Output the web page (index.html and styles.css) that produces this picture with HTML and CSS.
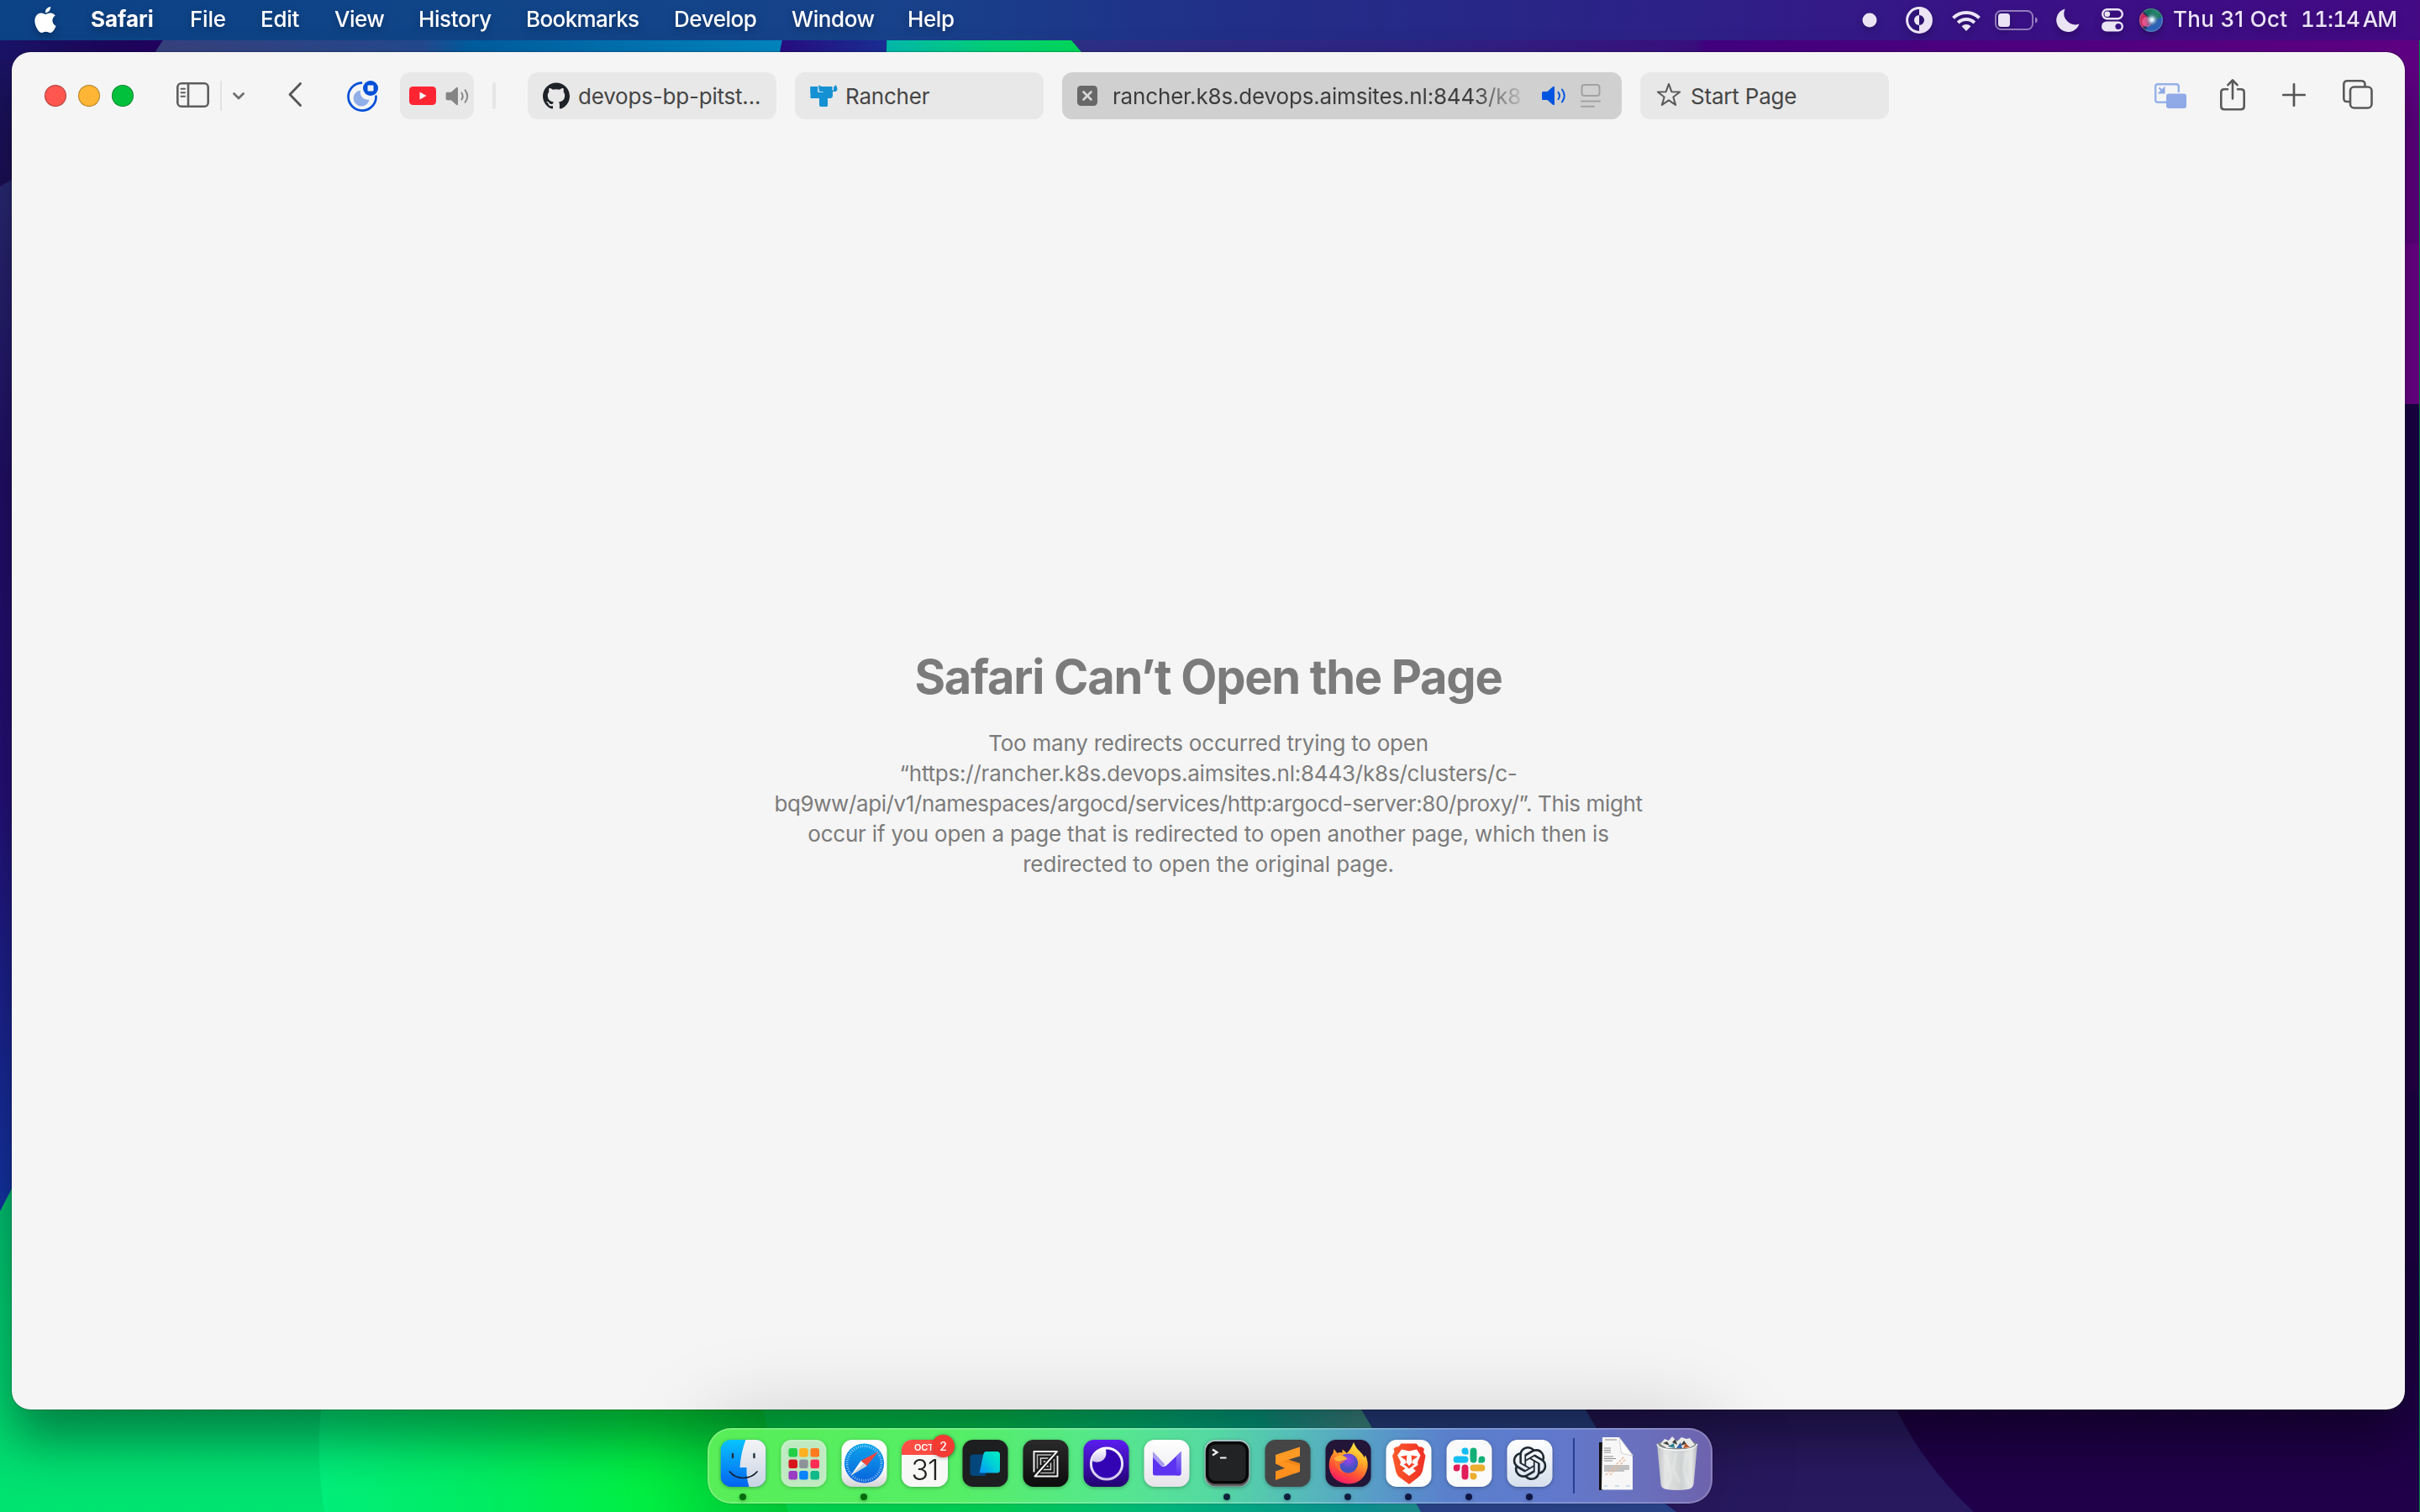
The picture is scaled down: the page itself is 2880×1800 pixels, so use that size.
FILE: index.html
```html
<!DOCTYPE html>
<html lang="en">
<head>
<meta charset="utf-8">
<title>Safari</title>
<link rel="stylesheet" href="styles.css">
</head>
<body>
<svg class="wallpaper" viewBox="0 0 2880 1800" preserveAspectRatio="none" aria-hidden="true">
  <defs>
    <linearGradient id="wLeft" x1="0" y1="0" x2="0" y2="1450" gradientUnits="userSpaceOnUse"><stop offset="0" stop-color="#292a75"/><stop offset=".15" stop-color="#292a75"/><stop offset=".4" stop-color="#210e68"/><stop offset=".65" stop-color="#25107a"/><stop offset="1" stop-color="#1236a8"/></linearGradient>
    <linearGradient id="wCorner" x1="0" y1="0" x2="0" y2="220" gradientUnits="userSpaceOnUse"><stop offset="0" stop-color="#1a1468"/><stop offset="1" stop-color="#1c1058"/></linearGradient>
    <linearGradient id="wBand" x1="0" y1="0" x2="200" y2="0" gradientUnits="userSpaceOnUse"><stop offset="0" stop-color="#1a1468"/><stop offset=".6" stop-color="#1c085c"/><stop offset="1" stop-color="#220060"/></linearGradient>
    <linearGradient id="wBlue" x1="190" y1="0" x2="930" y2="0" gradientUnits="userSpaceOnUse"><stop offset="0" stop-color="#37427f"/><stop offset=".42" stop-color="#25498f"/><stop offset=".5" stop-color="#005da0"/><stop offset="1" stop-color="#0087c0"/></linearGradient>
    <linearGradient id="wNavy" x1="927" y1="0" x2="1055" y2="0" gradientUnits="userSpaceOnUse"><stop offset="0" stop-color="#280d82"/><stop offset="1" stop-color="#1a2f95"/></linearGradient>
    <linearGradient id="wTeal" x1="1055" y1="0" x2="1280" y2="0" gradientUnits="userSpaceOnUse"><stop offset="0" stop-color="#00bbae"/><stop offset=".55" stop-color="#00d278"/><stop offset="1" stop-color="#00d95c"/></linearGradient>
    <linearGradient id="wTop" x1="1280" y1="0" x2="2880" y2="0" gradientUnits="userSpaceOnUse"><stop offset="0" stop-color="#2e3088"/><stop offset=".25" stop-color="#2f2484"/><stop offset=".46" stop-color="#3a1080"/><stop offset=".47" stop-color="#430080"/><stop offset="1" stop-color="#600084"/></linearGradient>
    <linearGradient id="wG1" x1="0" y1="1415" x2="0" y2="1800" gradientUnits="userSpaceOnUse"><stop offset="0" stop-color="#00c172"/><stop offset="1" stop-color="#00e470"/></linearGradient>
    <linearGradient id="wG2" x1="380" y1="0" x2="940" y2="0" gradientUnits="userSpaceOnUse"><stop offset="0" stop-color="#00ee7a"/><stop offset=".35" stop-color="#00ec62"/><stop offset=".7" stop-color="#00ef42"/><stop offset="1" stop-color="#00d83a"/></linearGradient>
    <linearGradient id="wG3" x1="908" y1="0" x2="1691" y2="0" gradientUnits="userSpaceOnUse"><stop offset="0" stop-color="#00e452"/><stop offset=".35" stop-color="#00dc5a"/><stop offset=".6" stop-color="#00c884"/><stop offset=".9" stop-color="#0a9c9c"/><stop offset="1" stop-color="#1f9496"/></linearGradient>
    <linearGradient id="wHaze" x1="1490" y1="0" x2="1620" y2="0" gradientUnits="userSpaceOnUse"><stop offset="0" stop-color="#4a9a94" stop-opacity="0"/><stop offset="1" stop-color="#4a9a94" stop-opacity=".9"/></linearGradient>
    <linearGradient id="wP" x1="0" y1="1500" x2="0" y2="1800" gradientUnits="userSpaceOnUse"><stop offset="0" stop-color="#1b0042"/><stop offset="1" stop-color="#200049"/></linearGradient>
  </defs>
  <rect width="2880" height="1800" fill="#1d0044"/>
  <rect width="900" height="1500" fill="url(#wLeft)"/>
  <path d="M0 0H60V206L14 214L0 222z" fill="url(#wCorner)"/>
  <path d="M0 48H240L160 120H40L14 70H0z" fill="url(#wBand)"/>
  <path d="M225 0H940L920 120H147z" fill="url(#wBlue)"/>
  <path d="M940 0H1056L1054 120H917z" fill="url(#wNavy)"/>
  <path d="M1056 0H1234L1338 120H1054z" fill="url(#wTeal)"/>
  <path d="M1234 0H2880V292H1400L1287 62z" fill="url(#wTop)"/>
  <path d="M2800 296L2880 289V481H2800z" fill="#6e008c"/>
  <path d="M2800 481H2880V714L2800 708z" fill="#1a0048"/>
  <path d="M2800 708L2880 714V1300H2800z" fill="#220046"/>
  <path d="M2000 1500H2880V1800H2000z" fill="url(#wP)"/>
  <path d="M1850 1600H2230L2257 1678Q2290 1745 2349 1800H1850z" fill="#28195f"/>
  <path d="M1600 1600H1860L1887 1678Q1925 1750 1995 1800H1600z" fill="#2b4690"/>
  <path d="M0 1442L14 1415L60 1380H420V1800H0z" fill="url(#wG1)"/>
  <path d="M382 1600V1678Q376 1735 386 1800H950V1600z" fill="url(#wG2)"/>
  <path d="M896 1600L908 1678L938 1800H1691L1620 1678L1590 1600z" fill="url(#wG3)"/>
  <path d="M1490 1660H1612L1620 1678L1650 1730H1530z" fill="url(#wHaze)"/>
  <rect x="2879" y="48" width="1" height="1752" fill="#008040"/>
</svg>

<header class="menubar">
  <svg class="apple" viewBox="2.2 0 19.6 24"><path fill="#fff" d="M12.152 6.896c-.948 0-2.415-1.078-3.96-1.04-2.04.027-3.91 1.183-4.961 3.014-2.117 3.675-.546 9.103 1.519 12.09 1.013 1.454 2.208 3.09 3.792 3.039 1.52-.065 2.09-.987 3.935-.987 1.831 0 2.35.987 3.96.948 1.637-.026 2.676-1.48 3.676-2.948 1.156-1.688 1.636-3.325 1.662-3.415-.039-.013-3.182-1.221-3.22-4.857-.026-3.04 2.48-4.494 2.597-4.559-1.429-2.09-3.623-2.324-4.39-2.376-2-.156-3.675 1.09-4.61 1.09zM15.53 3.83c.843-1.012 1.4-2.427 1.245-3.83-1.207.052-2.662.805-3.532 1.818-.78.896-1.454 2.338-1.273 3.714 1.338.104 2.715-.688 3.559-1.701"/></svg>
  <nav class="menus">
    <span class="m-app">Safari</span><span class="m-file">File</span><span class="m-edit">Edit</span><span class="m-view">View</span><span class="m-history">History</span><span class="m-bookmarks">Bookmarks</span><span class="m-develop">Develop</span><span class="m-window">Window</span><span class="m-help">Help</span>
  </nav>
  <div class="status">
    <svg class="s-dot" viewBox="0 0 18 18"><circle cx="9" cy="9" r="8.5" fill="#ebe4f5"/></svg>
    <svg class="s-half" viewBox="0 0 32 32"><circle cx="16" cy="16" r="14.4" fill="none" stroke="#ebe4f5" stroke-width="3"/><path d="M16 1.5A14.5 14.5 0 0 1 16 30.500V22A6 6 0 0 0 16 10z" fill="#ebe4f5"/><path d="M16 10A6 6 0 0 0 16 22z" fill="#ebe4f5"/></svg>
    <svg class="s-wifi" viewBox="0 0 34 25"><g fill="none" stroke="#ebe4f5" stroke-width="4"><path d="M1.500 9.300A22 22 0 0 1 32.500 9.300"/><path d="M7.200 15A14 14 0 0 1 26.800 15"/></g><path d="M11.500 19.300A7.800 7.800 0 0 1 22.500 19.300L17 25z" fill="#ebe4f5"/></svg>
    <svg class="s-batt" viewBox="0 0 52 24"><rect x="1" y="1" width="44" height="22" rx="6.500" fill="none" stroke="#ebe4f5" stroke-opacity=".5" stroke-width="2"/><rect x="4" y="4" width="14" height="16" rx="3.500" fill="#ebe4f5"/><path d="M48 8.500a3.600 3.600 0 0 1 0 7z" fill="#ebe4f5" fill-opacity=".55"/></svg>
    <svg class="s-moon" viewBox="0 0 28 28"><path d="M10.500.5A14 14 0 1 0 27.500 18.500A13.500 13.500 0 0 1 10.500.5z" fill="#ebe4f5"/></svg>
    <svg class="s-cc" viewBox="0 0 26 28"><rect x="1.200" y="1.200" width="23.600" height="11" rx="5.500" fill="none" stroke="#ebe4f5" stroke-width="2.400"/><circle cx="6.800" cy="6.700" r="3.300" fill="#ebe4f5"/><rect y="15.500" width="26" height="12" rx="6" fill="#ebe4f5"/><circle cx="20" cy="21.500" r="3.600" fill="#3b1186"/></svg>
    <svg class="s-siri" viewBox="0 0 28 28"><defs><radialGradient id="siri"><stop offset="0" stop-color="#fff"/><stop offset=".28" stop-color="#c9e9f5" stop-opacity=".9"/><stop offset="1" stop-color="#2b4468" stop-opacity="0"/></radialGradient><clipPath id="siriC"><circle cx="14" cy="14" r="14"/></clipPath></defs><g clip-path="url(#siriC)"><rect width="28" height="28" fill="#27355c"/><path d="M14 14L0 2V26z" fill="#c8285c"/><path d="M14 14L3 0H28V12z" fill="#16705f"/><path d="M14 14L28 10V28H6z" fill="#2a62b8"/><circle cx="9" cy="16" r="6" fill="#f06aa0" opacity=".7"/><circle cx="18" cy="8" r="6" fill="#2a9070" opacity=".6"/><circle cx="15" cy="13.500" r="8.500" fill="url(#siri)"/></g><circle cx="14" cy="14" r="13.400" fill="none" stroke="#a9a3bb" stroke-opacity=".5" stroke-width="1"/></svg>
    <span class="date">Thu 31 Oct</span><span class="time">11:14&thinsp;AM</span>
  </div>
</header>

<main class="window">
  <div class="toolbar">
    <div class="lights"><i class="red"></i><i class="amber"></i><i class="green"></i></div>
    <svg class="t-side" viewBox="0 0 39 30"><g fill="none" stroke="#5e5e5e" stroke-width="2.600"><rect x="1.300" y="1.300" width="36.400" height="27.400" rx="4.500"/><path d="M14 1.500V28.500"/></g><path d="M5.500 7.700H10M5.500 12.200H10M5.500 16.700H10" stroke="#5e5e5e" stroke-width="1.900" stroke-linecap="round"/></svg>
    <i class="rule thin"></i>
    <svg class="t-chev" viewBox="0 0 14 9"><path d="M1.500 1.500L7 7L12.500 1.500" fill="none" stroke="#6f6f6f" stroke-width="2.800" stroke-linecap="round" stroke-linejoin="round"/></svg>
    <svg class="t-back" viewBox="0 0 16 29"><path d="M14.500 1.500L2 14.500L14.500 27.500" fill="none" stroke="#555" stroke-width="2.800" stroke-linecap="round" stroke-linejoin="round"/></svg>
    <svg class="t-focus" viewBox="0 0 37 37"><path d="M17 2.600A16.500 16.500 0 1 0 34.500 18.500" fill="none" stroke="#0450d8" stroke-width="2.700" stroke-linecap="round"/><path d="M16 11.500A9.500 9.500 0 1 0 26.500 22.500A9 9 0 0 1 16 11.500z" fill="#90aee8"/><circle cx="28" cy="9" r="9" fill="#0450d8"/><rect x="24.500" y="5.500" width="7" height="7" rx="1" fill="#f5f5f5"/></svg>
    <div class="pin">
      <svg class="p-yt" viewBox="0 0 32 22"><rect width="32" height="22" rx="4.500" fill="#ff2432"/><path d="M12.500 6.500L20.500 11L12.500 15.500z" fill="#fff"/></svg>
      <svg class="p-spk" viewBox="0 0 29 24"><path d="M0 8.500Q0 7 1.500 7H6.500L13 1.300Q15 0 15 2.200V21.800Q15 24 13 22.700L6.500 17H1.500Q0 17 0 15.500z" fill="#858585"/><g fill="none" stroke="#858585" stroke-width="2" stroke-linecap="round"><path d="M19.500 7.800Q22.500 12 19.500 16.200"/><path d="M24 4.500Q29.500 12 24 19.500"/></g></svg>
    </div>
    <i class="rule thick"></i>
    <div class="tabs">
      <div class="tab">
        <svg class="i-gh" viewBox="0 0 24 24"><path fill="#1f2328" d="M12 .297c-6.630 0-12 5.373-12 12 0 5.303 3.438 9.800 8.205 11.385.6.113.82-.258.82-.577 0-.285-.01-1.040-.015-2.040-3.338.724-4.042-1.610-4.042-1.610C4.422 18.070 3.633 17.700 3.633 17.700c-1.087-.744.084-.729.084-.729 1.205.084 1.838 1.236 1.838 1.236 1.070 1.835 2.809 1.305 3.495.998.108-.776.417-1.305.76-1.605-2.665-.3-5.466-1.332-5.466-5.930 0-1.310.465-2.380 1.235-3.220-.135-.303-.54-1.523.105-3.176 0 0 1.005-.322 3.300 1.230.96-.267 1.980-.399 3-.405 1.020.006 2.040.138 3 .405 2.280-1.552 3.285-1.230 3.285-1.230.645 1.653.24 2.873.12 3.176.765.840 1.230 1.910 1.230 3.220 0 4.610-2.805 5.625-5.475 5.920.42.360.81 1.096.81 2.220 0 1.606-.015 2.896-.015 3.286 0 .315.21.690.825.570C20.565 22.092 24 17.592 24 12.297c0-6.627-5.373-12-12-12"/></svg>
        <span class="x-gh">devops-bp-pitst...</span>
      </div>
      <div class="tab">
        <svg class="i-ra" viewBox="0 0 32 26"><path d="M0 2H8V8.500H11Q9.200 5 10 0Q11.500 2 14 2H26V6.500H27.500V3L30 0Q33 4 31.500 6.500Q31 8 29 8H26.500V13Q26.500 15 24.500 16H20.500V24.500Q20.500 26 19 26H12.500Q10.500 26 10.500 24V16H0z" fill="#1491d2"/><path d="M0 2H9V10H0z" fill="#1491d2"/><path d="M9.300 2.500V8.500H15" fill="none" stroke="#b8dbef" stroke-width="1"/></svg>
        <span class="x-ra">Rancher</span>
      </div>
      <div class="tab active">
        <svg class="i-close" viewBox="0 0 24 24"><rect width="24" height="24" rx="4.500" fill="#686868"/><path d="M7.500 7.500L16.500 16.500M16.500 7.500L7.500 16.500" stroke="#d8d8d8" stroke-width="2.600" stroke-linecap="round"/></svg>
        <span class="x-url">rancher.k8s.devops.aimsites.nl:8443/k8</span>
        <svg class="i-spk" viewBox="0 0 29 24"><path d="M0 8.500Q0 7 1.500 7H6.500L13 1.300Q15 0 15 2.200V21.800Q15 24 13 22.700L6.500 17H1.500Q0 17 0 15.500z" fill="#0055e0"/><g fill="none" stroke="#0055e0" stroke-width="2" stroke-linecap="round"><path d="M19.500 7.800Q22.500 12 19.500 16.200"/><path d="M24 4.500Q29.500 12 24 19.500"/></g></svg>
        <svg class="i-read" viewBox="0 0 24 28"><g fill="none" stroke="#a2a2a2" stroke-width="2"><rect x="1.500" y="1" width="21" height="13" rx="3"/><path d="M1 20.500H23M1 26.800H16" stroke-linecap="round"/></g></svg>
      </div>
      <div class="tab">
        <svg class="i-star" viewBox="0 0 28 27"><path d="M14 1.800L17.100 10.400L26.300 10.700L19 16.300L21.600 25.100L14 19.900L6.400 25.100L9 16.300L1.700 10.700L10.900 10.400z" fill="none" stroke="#5a5a5a" stroke-width="1.900" stroke-linejoin="round"/></svg>
        <span class="x-start">Start Page</span>
      </div>
    </div>
    <svg class="t-pip" viewBox="0 0 38 30"><path d="M14 22.800H4Q1.200 22.800 1.200 20V4Q1.200 1.200 4 1.200H26Q28.800 1.200 28.800 4V11" fill="none" stroke="#96b2ea" stroke-width="2.400"/><rect x="14" y="12.500" width="24" height="17.500" rx="3" fill="#8faae6"/><path d="M5.500 5.500L10 10M11.500 6V11.500H6z" stroke="#8faae6" stroke-width="2" fill="#8faae6"/></svg>
    <svg class="t-share" viewBox="0 0 30 38"><g fill="none" stroke="#5a5a5a" stroke-width="2.600" stroke-linecap="round" stroke-linejoin="round"><path d="M9 12.300H5Q1.300 12.300 1.300 16V32.500Q1.300 36.200 5 36.200H25Q28.700 36.200 28.700 32.500V16Q28.700 12.300 25 12.300H21"/><path d="M15 23.500V2M9.500 7.200L15 1.500L20.500 7.200"/></g></svg>
    <svg class="t-plus" viewBox="0 0 28 28"><path d="M14 1.300V26.700M1.300 14H26.700" stroke="#555" stroke-width="2.700" stroke-linecap="round"/></svg>
    <svg class="t-over" viewBox="0 0 36 35"><g fill="none" stroke="#5a5a5a" stroke-width="2.600"><path d="M8.500 26H5Q1.300 26 1.300 22V5.500Q1.300 1.300 5.500 1.300H22Q26.500 1.300 26.500 5.500V8"/><rect x="9" y="8.500" width="25.500" height="25" rx="4.500"/></g></svg>
  </div>
  <section class="error">
    <h1>Safari Can’t Open the Page</h1>
    <p><span class="l1">Too many redirects occurred trying to open</span><span class="l2">“https://rancher.k8s.devops.aimsites.nl:8443/k8s/clusters/c-</span><span class="l3">bq9ww/api/v1/namespaces/argocd/services/http:argocd-server:80/proxy/”. This might</span><span class="l4">occur if you open a page that is redirected to open another page, which then is</span><span class="l5">redirected to open the original page.</span></p>
  </section>
</main>

<footer class="dock">
  <div class="app on">
    <svg viewBox="0 0 54 56"><defs><linearGradient id="fi" x1="0" y1="0" x2="0" y2="1"><stop offset="0" stop-color="#08c4ff"/><stop offset="1" stop-color="#0463f0"/></linearGradient><linearGradient id="fw" x1="0" y1="0" x2="0" y2="1"><stop offset="0" stop-color="#f4f4f6"/><stop offset="1" stop-color="#c8d4e4"/></linearGradient><clipPath id="fc"><rect width="54" height="56" rx="12.500"/></clipPath></defs><g clip-path="url(#fc)"><rect width="54" height="56" fill="url(#fi)"/><path d="M30 0Q24 16 23 33H31Q30.500 45 34 56H54V0z" fill="url(#fw)"/><path d="M14.500 17V21M40 17V21" stroke="#20303c" stroke-width="2.400" stroke-linecap="round"/><path d="M11 38Q16 45 27 45.500Q38 45 43.500 38" fill="none" stroke="#15202c" stroke-width="1.700" stroke-linecap="round"/></g></svg>
  </div>
  <div class="app">
    <svg viewBox="0 0 54 56"><rect width="54" height="56" rx="12.500" fill="#fff" fill-opacity=".66"/><g><rect x="9" y="10" width="10.500" height="10.500" rx="2.500" fill="#20cf45"/><rect x="21.700" y="10" width="10.500" height="10.500" rx="2.500" fill="#ffb01f"/><rect x="35" y="10" width="10.500" height="10.500" rx="2.500" fill="#ff7a1c"/><rect x="9" y="23.500" width="10.500" height="10.500" rx="2.500" fill="#d8141c"/><rect x="21.700" y="23.500" width="10.500" height="10.500" rx="2.500" fill="#8d9399"/><rect x="35" y="23.500" width="10.500" height="10.500" rx="2.500" fill="#ff2d55"/><rect x="9" y="37" width="10.500" height="10.500" rx="2.500" fill="#9a3cc4"/><rect x="21.700" y="37" width="10.500" height="10.500" rx="2.500" fill="#0a84f8"/><rect x="35" y="37" width="10.500" height="10.500" rx="2.500" fill="#10b98a"/></g></svg>
  </div>
  <div class="app on">
    <svg viewBox="0 0 54 56"><defs><linearGradient id="sw" x1="0" y1="0" x2="0" y2="1"><stop offset=".6" stop-color="#fff"/><stop offset="1" stop-color="#d4d4d6"/></linearGradient><linearGradient id="sb" x1="0" y1="0" x2="0" y2="1"><stop offset="0" stop-color="#0ba4ec"/><stop offset="1" stop-color="#0a62dc"/></linearGradient></defs><rect width="54" height="56" rx="12.500" fill="url(#sw)"/><circle cx="27" cy="28" r="23.600" fill="url(#sb)"/><circle cx="27" cy="28" r="20.500" fill="none" stroke="#d6eefc" stroke-opacity=".8" stroke-width="3" stroke-dasharray=".8 1.880"/><path d="M44 14L23 25L30 31z" fill="#f2463c"/><path d="M11 42.500L23 25L30 31z" fill="#f6f6f6"/><path d="M11 42.500L26.500 28L30 31z" fill="#c9d0d8"/></svg>
  </div>
  <div class="app">
    <div class="cal"><b>OCT</b><span>31</span></div><em class="badge">2</em>
  </div>
  <div class="app">
    <svg viewBox="0 0 54 56"><defs><linearGradient id="wa" x1="1" y1="0" x2="0" y2="1"><stop offset="0" stop-color="#00f0c0"/><stop offset=".5" stop-color="#00cdd8"/><stop offset="1" stop-color="#0a90ff"/></linearGradient></defs><rect width="54" height="56" rx="12.500" fill="#1d1e20"/><path d="M13 17.500H25L20 39H28L27 43H13Q9 43 9 39V21.500Q9 17.500 13 17.500z" fill="#04477c"/><path d="M28 14H41Q44.500 14 44.500 17.500V36Q44.500 39.500 41 39.500H20L25 16.500Q25.500 14 28 14z" fill="url(#wa)"/></svg>
  </div>
  <div class="app">
    <svg viewBox="0 0 54 56"><defs><linearGradient id="zd" x1="0" y1="0" x2="0" y2="1"><stop offset="0" stop-color="#2a2a2a"/><stop offset="1" stop-color="#0c0c0c"/></linearGradient></defs><rect width="54" height="56" rx="12.500" fill="url(#zd)"/><g fill="none" stroke-width="1.500"><path d="M17 34.500V18H34M37 23V39.500H20" stroke="#b5b5b5"/><path d="M21 30V22H30M33 27.500V35.500H24" stroke="#d5d5d5"/><path d="M25 26.500V26H27M29.500 31V31.500H28" stroke="#eee"/><path d="M40.500 14L14 43.500" stroke="#161616" stroke-width="4.500"/><path d="M13 38.500V14H40.500L14 43.500H41V19" stroke="#f5f5f5" stroke-width="1.900" stroke-linejoin="round"/></g></svg>
  </div>
  <div class="app">
    <svg viewBox="0 0 54 56"><defs><linearGradient id="in" x1="0" y1="0" x2="0" y2="1"><stop offset="0" stop-color="#5b1df0"/><stop offset="1" stop-color="#21016e"/></linearGradient><linearGradient id="im" x1="0" y1="0" x2="0" y2="1"><stop offset="0" stop-color="#fff"/><stop offset="1" stop-color="#cfc4ec"/></linearGradient></defs><rect width="54" height="56" rx="12.500" fill="url(#in)"/><circle cx="27.500" cy="28.500" r="18.600" fill="#3204b4" stroke="url(#im)" stroke-width="3"/><path d="M11 20Q16 11 26 10Q29 19 23.500 24Q17 29 10 25z" fill="url(#im)"/></svg>
  </div>
  <div class="app">
    <svg viewBox="0 0 54 56"><defs><linearGradient id="pb" x1="0" y1="0" x2="0" y2="1"><stop offset="0" stop-color="#fff"/><stop offset="1" stop-color="#e6e4ea"/></linearGradient><linearGradient id="pm" x1="0" y1="0" x2="0" y2="1"><stop offset="0" stop-color="#8f7cf0"/><stop offset="1" stop-color="#5a32f5"/></linearGradient></defs><rect width="54" height="56" rx="12.500" fill="url(#pb)"/><path d="M10.500 14L25 29.500L10.500 40z" fill="#a99bf2"/><path d="M10.500 21L20.500 31.500Q25 33.500 29 28.500L44 14V40Q44 42.500 41.500 42.500H13Q10.500 42.500 10.500 40z" fill="#5b33f0"/><path d="M38.500 20L44 14V40Q44 42.500 41.500 42.500H38.500z" fill="url(#pm)"/></svg>
  </div>
  <div class="app on">
    <svg viewBox="0 0 54 56"><rect width="54" height="56" rx="12.500" fill="#a9c3c4"/><rect x="1" y="2.500" width="52" height="53" rx="12" fill="#605d60"/><rect x="1.500" y="2" width="51" height="50.500" rx="11.500" fill="#080808"/><rect x="5" y="5.500" width="44" height="43.500" rx="8" fill="#222324"/><path d="M9.500 11.500L15 15L9.500 18.500M18.500 21.500H26" fill="none" stroke="#f3f3f3" stroke-width="2.200"/></svg>
  </div>
  <div class="app on">
    <svg viewBox="0 0 54 56"><rect width="54" height="56" rx="12.500" fill="#454545"/><path d="M12.500 37.500L41.500 28V38L12.500 48z" fill="#ff8f1c"/><path d="M12.500 18.500L41.500 28V37.500L12.500 28.500z" fill="#f28418"/><path d="M41.500 8.500L12.500 18V28.500L41.500 19.500z" fill="#ff9a24"/><path d="M12.500 28.500L22 25.500L41.500 31.500V37.500L36 40z" fill="#ff9320"/></svg>
  </div>
  <div class="app on">
    <svg viewBox="0 0 54 56"><defs><linearGradient id="ff" x1=".75" y1="0" x2=".3" y2="1"><stop offset="0" stop-color="#fff04a"/><stop offset=".35" stop-color="#ffae28"/><stop offset=".7" stop-color="#ff5035"/><stop offset="1" stop-color="#f5156c"/></linearGradient><radialGradient id="fg" cx=".5" cy=".3"><stop offset="0" stop-color="#a044ee"/><stop offset="1" stop-color="#4450c0"/></radialGradient></defs><rect width="54" height="56" rx="12.500" fill="#221538"/><path d="M33.500 3Q36 10 41 14Q45 18 46 21L47.500 18.500Q51 26 50 33Q46 51.500 28 52.500Q8 51.500 4.500 34Q3 23 9 16L10 11L14 16Q17 14.500 20 15.500L20 11.500Q24 14 25 16Q30 12 33.500 3z" fill="url(#ff)"/><circle cx="27" cy="28" r="11.500" fill="url(#fg)"/><path d="M10 24Q14 27 19 26Q22 25 24 24Q20 28 17 29Q17 37 24 39.500Q13 39 10 24z" fill="#ff6b34"/><path d="M10 22Q15 18 20 19Q24 19.500 26 23Q20 25 17 26Q12 26 10 22z" fill="#ffb13b"/></svg>
  </div>
  <div class="app on">
    <svg viewBox="0 0 54 56"><defs><linearGradient id="br"><stop offset="0" stop-color="#fb5a2a"/><stop offset="1" stop-color="#ef2f26"/></linearGradient></defs><rect width="54" height="56" rx="12.500" fill="#fff"/><path d="M18 4.500H36L39.500 8.500Q43 7.500 45.500 11L44.500 14.500L47 19L43.500 37Q42 42 38 45L27.500 53L16.500 45Q12.500 42 11.500 37L7.500 19L10 14.500L9 11Q11.500 7.500 14.500 8.500z" fill="url(#br)"/><path d="M18.500 11.500L27.500 13.500L36.500 11.500L41 18.500L37.500 26.500L38 30L32 34L35.500 37L27.500 43L19.500 37L23 34L16.500 30L17.500 26.500L13.500 18.500z" fill="#fff"/><path d="M17 20L25 18.500L24 27L27.500 31L31 27L30 18.500L38 20L32 24L31 28L34 29L27.500 34.500L21 29L24 28L23 24z" fill="#f64428"/><path d="M23 36.500L27.500 34.500L32 36.500L27.500 39.500z" fill="#fff"/></svg>
  </div>
  <div class="app on">
    <svg viewBox="0 0 54 56"><rect width="54" height="56" rx="12.500" fill="#fafafa"/><svg x="8" y="9" width="38" height="39" viewBox="0 0 24 24"><path fill="#e01e5a" d="M5.042 15.165a2.528 2.528 0 0 1-2.520 2.523A2.528 2.528 0 0 1 0 15.165a2.527 2.527 0 0 1 2.522-2.520h2.520v2.520zM6.313 15.165a2.527 2.527 0 0 1 2.521-2.520 2.527 2.527 0 0 1 2.521 2.520v6.313A2.528 2.528 0 0 1 8.834 24a2.528 2.528 0 0 1-2.521-2.522v-6.313z"/><path fill="#14bdf2" d="M8.834 5.042a2.528 2.528 0 0 1-2.521-2.520A2.528 2.528 0 0 1 8.834 0a2.528 2.528 0 0 1 2.521 2.522v2.520H8.834zM8.834 6.313a2.528 2.528 0 0 1 2.521 2.521 2.528 2.528 0 0 1-2.521 2.521H2.522A2.528 2.528 0 0 1 0 8.834a2.528 2.528 0 0 1 2.522-2.521h6.312z"/><path fill="#12b076" d="M18.956 8.834a2.528 2.528 0 0 1 2.522-2.521A2.528 2.528 0 0 1 24 8.834a2.528 2.528 0 0 1-2.522 2.521h-2.522V8.834zM17.688 8.834a2.528 2.528 0 0 1-2.523 2.521 2.527 2.527 0 0 1-2.520-2.521V2.522A2.527 2.527 0 0 1 15.165 0a2.528 2.528 0 0 1 2.523 2.522v6.312z"/><path fill="#ecae2e" d="M15.165 18.956a2.528 2.528 0 0 1 2.523 2.522A2.528 2.528 0 0 1 15.165 24a2.527 2.527 0 0 1-2.520-2.522v-2.522h2.520zM15.165 17.688a2.527 2.527 0 0 1-2.520-2.523 2.526 2.526 0 0 1 2.520-2.520h6.313A2.527 2.527 0 0 1 24 15.165a2.528 2.528 0 0 1-2.522 2.523h-6.313z"/></svg></svg>
  </div>
  <div class="app on">
    <svg viewBox="0 0 54 56"><defs><linearGradient id="oa" x1="0" y1="0" x2="0" y2="1"><stop offset="0" stop-color="#fff"/><stop offset="1" stop-color="#d5dfec"/></linearGradient></defs><rect width="54" height="56" rx="12.500" fill="url(#oa)"/><svg x="7" y="7.500" width="40" height="41" viewBox="0 0 24 24"><path fill="#1f2933" d="M22.282 9.821a5.985 5.985 0 0 0-.516-4.910 6.046 6.046 0 0 0-6.510-2.900A6.065 6.065 0 0 0 4.981 4.182a5.985 5.985 0 0 0-3.998 2.900 6.046 6.046 0 0 0 .743 7.097 5.980 5.980 0 0 0 .510 4.911 6.051 6.051 0 0 0 6.515 2.900A5.985 5.985 0 0 0 13.260 24a6.056 6.056 0 0 0 5.772-4.206 5.990 5.990 0 0 0 3.998-2.900 6.056 6.056 0 0 0-.747-7.073zM13.260 22.430a4.476 4.476 0 0 1-2.876-1.040l.141-.081 4.779-2.758a.795.795 0 0 0 .393-.681v-6.737l2.020 1.169a.071.071 0 0 1 .038.052v5.583a4.504 4.504 0 0 1-4.495 4.493zM3.600 18.304a4.471 4.471 0 0 1-.535-3.014l.142.085 4.783 2.759a.771.771 0 0 0 .781 0l5.843-3.369v2.332a.080.080 0 0 1-.033.062L9.740 19.950a4.500 4.500 0 0 1-6.140-1.646zM2.341 7.896a4.485 4.485 0 0 1 2.366-1.973V11.600a.766.766 0 0 0 .388.677l5.815 3.355-2.020 1.168a.076.076 0 0 1-.071 0L3.989 14.014A4.504 4.504 0 0 1 2.341 7.872zM18.937 11.752l-5.833-3.387L15.119 7.200a.076.076 0 0 1 .071 0l4.830 2.791a4.494 4.494 0 0 1-.676 8.105v-5.678a.790.790 0 0 0-.407-.667zM20.948 8.728l-.142-.085-4.774-2.782a.776.776 0 0 0-.785 0L9.409 9.230V6.897a.066.066 0 0 1 .028-.061l4.830-2.787a4.499 4.499 0 0 1 6.680 4.660zM8.307 12.863l-2.020-1.164a.080.080 0 0 1-.038-.057V6.074a4.499 4.499 0 0 1 7.376-3.453l-.142.080L8.704 5.459a.795.795 0 0 0-.393.681zM9.404 10.498l2.602-1.500 2.607 1.500v2.999l-2.597 1.500-2.607-1.500z"/></svg></svg>
  </div>
  <i class="divider"></i>
  <svg class="doc" viewBox="0 0 42 64"><path d="M0 7H5V64H0z" fill="#111"/><path d="M4 1H24L40 24V63.500H3z" fill="#f7f7f7"/><path d="M24 1L41 23L26 20z" fill="#d8d8da"/><path d="M24 1L40 23L30 21Q26 20 26 17z" fill="#fff" stroke="#bbb" stroke-width=".6"/><path d="M7 4H21M6 14H14M6 16.500H14M6 19H14M6 24H17M6 26.500H20M6 29H16M6 35H36M6 37H36M6 39H36M6 41H30" stroke="#8c8c8c" stroke-width="1.100"/><path d="M8 46L30 24M13 46L32 27" stroke="#e9bb9b" stroke-width="1.500" stroke-dasharray="3 1.500"/><path d="M6 59H10M19 59H24M32 59H37" stroke="#9cc7ec" stroke-width="1"/></svg>
  <svg class="trash" viewBox="0 0 50 64"><defs><linearGradient id="tr"><stop offset="0" stop-color="#b9bcbe"/><stop offset=".2" stop-color="#e4e5e5"/><stop offset=".6" stop-color="#cfd2d2"/><stop offset=".85" stop-color="#e6e7e7"/><stop offset="1" stop-color="#b5b5bc"/></linearGradient></defs><path d="M1 9L5.500 57Q6 62 12 63Q25 65 38 63Q43.500 62 44.500 57L49 9z" fill="url(#tr)"/><ellipse cx="25" cy="10" rx="24" ry="5.500" fill="#858889"/><path d="M5 9L10 3L15 5L19 0L25 6L30 1L36 3L40 2L46 10L38 14H13z" fill="#e9e9e7"/><path d="M8 8L13 6L16 11zM19 7L23 3L25 10zM29 11L33 5L36 9z" fill="#3f423e"/><path d="M14 12L21 8L22 14z" fill="#317f90"/><path d="M24 14L29 7L31 14z" fill="#3768a6"/><path d="M32 14L35 8L40 13z" fill="#bc592c"/><path d="M1 9Q3 16 25 16.500Q46 16 49 9" fill="none" stroke="#f7f7f7" stroke-width="1.400"/><path d="M12 22L18 48L12 60M24 20L20 38L28 56M36 20L33 40L38 58" fill="none" stroke="#f6f6f6" stroke-opacity=".25" stroke-width="4"/></svg>
</footer>
</body>
</html>
```
FILE: styles.css
```css
* { box-sizing: border-box; }
html, body { margin: 0; }
body {
  position: relative;
  width: 2880px;
  height: 1800px;
  overflow: hidden;
  display: flex;
  flex-direction: column;
  font-family: Inter, "Liberation Sans", sans-serif;
  font-size: 26px;
}
svg { display: block; flex: none; }
.wallpaper { position: absolute; inset: 0; width: 2880px; height: 1800px; z-index: -1; }

/* Menu bar */
.menubar {
  flex: none;
  height: 48px;
  display: flex;
  align-items: center;
  padding: 0 28px 0 41px;
  color: #fff;
  font-weight: 500;
  background: linear-gradient(90deg, #0c4286 0, #104588 600px, #18418a 1100px, #212f88 1450px, #2d2187 2000px, #3a1186 2400px, #430a84 2880px);
}
.menubar svg, .menubar span { filter: drop-shadow(0 3px 4px rgba(0, 0, 0, .28)); }
.apple { width: 26px; height: 31px; margin-top: -2px; }
.menus { display: flex; margin-left: 41px; line-height: 46px; height: 48px; }
.menus span { white-space: nowrap; flex: none; }
.m-app { width: 118px; font-weight: 700; }
.m-file { width: 84px; letter-spacing: -.2px; }
.m-edit { width: 88px; letter-spacing: -.3px; }
.m-view { width: 100px; letter-spacing: -.5px; }
.m-history { width: 128px; letter-spacing: -.4px; }
.m-bookmarks { width: 176px; letter-spacing: -.6px; }
.m-develop { width: 140px; letter-spacing: -.45px; }
.m-window { width: 138px; letter-spacing: -.4px; }
.m-help { letter-spacing: -.4px; }
.status { margin-left: auto; display: flex; align-items: center; height: 48px; color: #ebe4f5; }
.status span { line-height: 46px; white-space: nowrap; height: 48px; }
.s-dot { width: 18px; height: 18px; }
.s-half { width: 32px; height: 32px; margin-left: 34px; }
.s-wifi { width: 34px; height: 25px; margin-left: 23px; }
.s-batt { width: 52px; height: 24px; margin-left: 17px; }
.s-moon { width: 28px; height: 28px; margin-left: 21px; }
.s-cc { width: 26px; height: 28px; margin-left: 26px; }
.s-siri { width: 28px; height: 28px; margin-left: 19px; }
.date { width: 152px; margin-left: 12px; letter-spacing: .35px; }
.time { width: 114px; font-variant-numeric: tabular-nums; letter-spacing: -.85px; }

/* Browser window */
.window {
  flex: none;
  width: 2848px;
  height: 1616px;
  margin: 14px 0 22px 14px;
  border-radius: 22px;
  background: #f5f5f5;
  box-shadow: 0 0 2px rgba(0, 0, 0, .6), 0 36px 60px rgba(0, 0, 0, .4);
  display: flex;
  flex-direction: column;
}
.toolbar { height: 104px; display: flex; align-items: center; padding: 0 38px 0 39px; }
.lights { display: flex; gap: 14px; }
.lights i { width: 26px; height: 26px; border-radius: 50%; border: 1px solid rgba(0, 0, 0, .3); }
.red { background: #ff5750; }
.amber { background: #ffb535; }
.green { background: #00c03c; }
.rule { background: #e2e2e2; flex: none; }
.thin { width: 2px; height: 36px; margin-left: 13px; }
.thick { width: 4px; height: 32px; margin-left: 22px; border-radius: 2px; background: #e6e6e6; }
.t-side { width: 39px; height: 30px; margin: -2px 0 0 51px; }
.t-chev { width: 14px; height: 9px; margin-left: 13px; }
.t-back { width: 16px; height: 29px; margin: -3px 0 0 52px; }
.t-focus { width: 37px; height: 37px; margin-left: 54px; }
.pin { width: 88px; height: 56px; margin-left: 26px; border-radius: 12px; background: #e8e8e8; display: flex; align-items: center; padding-left: 11px; }
.p-yt { width: 32px; height: 22px; }
.p-spk { width: 29px; height: 23px; margin-left: 11px; }
.tabs { display: grid; grid-template-columns: 296px 296px 666px 296px; gap: 22px; margin-left: 38px; }
.tab { height: 56px; border-radius: 12px; background: #e8e8e8; color: #454545; display: flex; align-items: center; padding-left: 18px; overflow: hidden; }
.tab span { white-space: nowrap; line-height: 56px; padding-top: 2px; }
.active { background: #d0d0d0; color: #3c3c3c; }
.i-gh { width: 32px; height: 32px; }
.x-gh { margin-left: 10px; letter-spacing: -.2px; }
.i-ra { width: 33px; height: 26px; }
.x-ra { margin-left: 9px; letter-spacing: -.2px; }
.i-close { width: 24px; height: 24px; }
.x-url { width: 489px; margin-left: 18px; letter-spacing: -.17px; -webkit-mask-image: linear-gradient(90deg, #000 430px, transparent 496px); mask-image: linear-gradient(90deg, #000 430px, transparent 496px); }
.i-spk { width: 29px; height: 24px; margin-left: 22px; }
.i-read { width: 24px; height: 28px; margin-left: 17px; }
.i-star { width: 30px; height: 29px; margin: -3px 0 0 1px; }
.x-start { margin-left: 11px; letter-spacing: -.2px; }
.t-pip { width: 38px; height: 30px; margin-left: auto; }
.t-share { width: 30px; height: 38px; margin: -3px 0 0 40px; }
.t-plus { width: 28px; height: 28px; margin: -3px 0 0 44px; }
.t-over { width: 36px; height: 35px; margin: -3px 0 0 44px; }

/* Error message */
.error { padding-top: 606px; color: #7b7b7b; text-align: center; }
.error h1 { margin: 0; font-size: 56px; line-height: 68px; font-weight: 700; white-space: nowrap; letter-spacing: -1.28px; }
.error p { margin: 27px 0 0; line-height: 36px; }
.error p span { display: block; white-space: nowrap; }
.l1, .l2 { letter-spacing: -.22px; }
.l3 { letter-spacing: -.39px; }
.l4 { letter-spacing: -.2px; }
.l5 { letter-spacing: -.14px; }

/* Dock */
.dock {
  position: relative;
  z-index: 2;
  flex: none;
  width: 1196px;
  height: 90px;
  margin-left: 842px;
  border-radius: 28px;
  border: 2px solid rgba(255, 255, 255, .2);
  background: linear-gradient(90deg, #58ee58 0, #55ee66 300px, #56e78e 480px, #55d9a2 600px, #55bdb8 700px, #589ac8 800px, #5a80cc 880px, #6079cc 1000px, #6a70bd 1110px, #6e63ae 1190px);
  background-origin: border-box;
  box-shadow: 0 0 2px rgba(0, 0, 0, .3), 0 0 110px rgba(0, 0, 0, .22);
  display: flex;
  padding: 12px 0 0 13px;
}
.app { position: relative; width: 55px; height: 56px; margin-right: 17px; flex: none; filter: drop-shadow(0 1px 2px rgba(0, 0, 0, .3)); }
.app > svg { width: 55px; height: 56px; }
.on::after { content: ""; position: absolute; left: 23px; top: 64px; width: 8px; height: 8px; border-radius: 50%; background: rgba(0, 0, 40, .8); }
.app.on:nth-child(-n+3)::after { background: #056b0c; }
.cal { width: 55px; height: 56px; border-radius: 12.5px; background: #f8f8f7; overflow: hidden; text-align: center; color: #222; }
.cal b { display: block; height: 18px; padding-right: 2px; background: #ff4d43; color: #fff; font-size: 11px; line-height: 19px; font-weight: 600; letter-spacing: -.3px; }
.cal span { display: block; font-size: 34px; line-height: 36px; font-weight: 300; letter-spacing: -1px; }
.badge { position: absolute; left: 36px; top: -6px; width: 27px; height: 27px; border-radius: 50%; background: #f43b33; color: #fff; font: 500 14px/27px Inter, sans-serif; text-align: center; box-shadow: 0 1px 4px rgba(0, 0, 0, .3); }
.divider { width: 2px; height: 66px; margin: -2px 0 0 7px; background: #2b3f92; flex: none; }
.doc { width: 42px; height: 64px; margin: -4px 0 0 29px; }
.trash { width: 50px; height: 64px; margin: -4px 0 0 26px; }
```
